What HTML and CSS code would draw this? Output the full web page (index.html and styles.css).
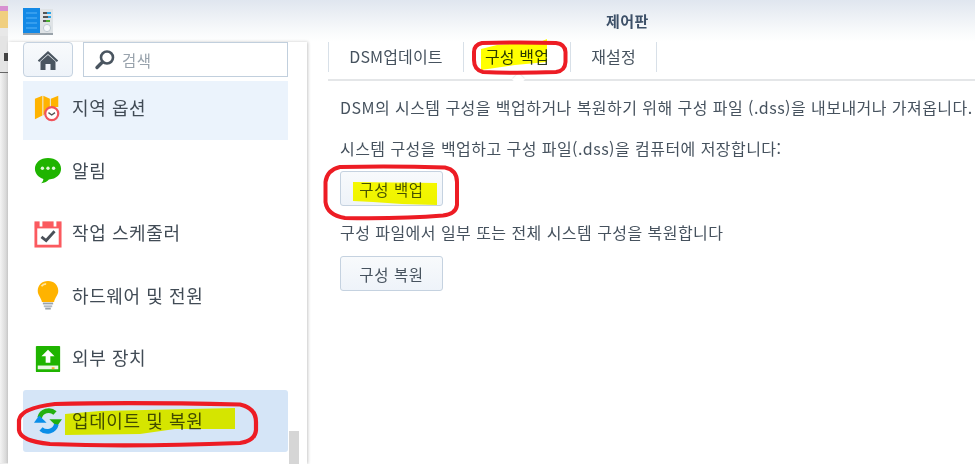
FILE: index.html
```html
<!DOCTYPE html>
<html lang="ko">
<head>
<meta charset="utf-8">
<title>제어판</title>
<link rel="stylesheet" href="styles.css">
</head>
<body>
<div class="page">
  <div class="desktop">
    <div class="desk-art"></div>
    <div class="desk-bar"><span class="desk-arrow"></span></div>
    <div class="desk-line"></div>
  </div>
  <div class="window">
    <header class="titlebar">
      <svg class="app-icon" width="30" height="27" viewBox="0 0 30 27">
        <rect x="17" y="1" width="13" height="25" fill="#dfe3e6"/>
        <rect x="0" y="0" width="17" height="26" fill="#1389e6"/>
        <rect x="0" y="25" width="30" height="2" fill="#9aa3aa"/>
        <path d="M3 5h11M3 10h11M3 15h11M3 20h11" stroke="#58b4f5" stroke-width="1.2"/>
        <rect x="20" y="4" width="4" height="2" fill="#555"/><rect x="24" y="4" width="4" height="2" fill="#2aa5e8"/>
        <rect x="20" y="8" width="5" height="2" fill="#555"/><rect x="25" y="8" width="3" height="2" fill="#2aa5e8"/>
        <rect x="20" y="12" width="3" height="2" fill="#555"/><rect x="23" y="12" width="4" height="2" fill="#4cb030"/>
        <circle cx="24" cy="20" r="3.6" fill="#f6f8fa" stroke="#c2ccd4"/>
      </svg>
      <h1 class="title">제어판</h1>
    </header>
    <div class="main">
      <aside class="sidebar">
        <div class="tools">
          <button class="home" aria-label="home">
            <svg width="22" height="20" viewBox="0 0 22 20"><path d="M11 1 0.8 10.5l1.4 1.5L11 4l8.800 8 1.400-1.500z" fill="#4a5560"/><path d="M3.500 11.500 11 5l7.500 6.500V20h-5v-6h-5v6h-5z" fill="#4a5560"/></svg>
          </button>
          <div class="search">
            <svg width="22" height="22" viewBox="0 0 22 22"><circle cx="13" cy="8.500" r="6" fill="none" stroke="#4a5560" stroke-width="2.600"/><path d="M8.500 13 3 18.500" stroke="#4a5560" stroke-width="3.400" stroke-linecap="round"/></svg>
            <span class="search-text">검색</span>
          </div>
        </div>
        <ul class="menu">
          <li class="item item-first">
            <svg class="ico" width="28" height="28" viewBox="0 0 30 30">
              <path d="M1 5l8-3v21l-8 4zM10 2l7 3v10l-7 8zM18 5l8-3v12h-8z" fill="#ffb300"/>
              <circle cx="19" cy="21" r="7" fill="#fff" stroke="#f0545c" stroke-width="2.400"/>
              <path d="M15.500 20l3.500 2.500 3.500-2.500" fill="none" stroke="#555" stroke-width="1.500"/>
            </svg>
            <span>지역 옵션</span>
          </li>
          <li class="item">
            <svg class="ico" width="28" height="28" viewBox="0 0 30 30">
              <path d="M15 1C6.800 1 1 6 1 12.500c0 5 3.500 9 9 11 0 2-1 3.500-2.500 4.500 4 0 7-2.500 8.500-4 8-.5 13-5.500 13-11.500C29 6 23.200 1 15 1z" fill="#1fb400"/>
              <circle cx="9" cy="12" r="1.800" fill="#dff5d8"/><circle cx="15" cy="12" r="1.800" fill="#dff5d8"/><circle cx="21" cy="12" r="1.800" fill="#dff5d8"/>
            </svg>
            <span>알림</span>
          </li>
          <li class="item">
            <svg class="ico" width="28" height="28" viewBox="0 0 30 30">
              <rect x="2" y="3" width="26" height="25" fill="#fff" stroke="#fb5a5f" stroke-width="3"/>
              <rect x="1" y="3" width="28" height="6" fill="#fb5a5f"/>
              <rect x="6" y="1" width="3" height="6" fill="#fff"/><rect x="21" y="1" width="3" height="6" fill="#fff"/>
              <path d="M8 18l5 4 9-10" fill="none" stroke="#4a5058" stroke-width="3"/>
            </svg>
            <span>작업 스케줄러</span>
          </li>
          <li class="item">
            <svg class="ico" width="28" height="30" viewBox="0 0 30 32">
              <path d="M15 0C8.500 0 4 4.500 4 10.500c0 5 3.500 7 4.500 12h13c1-5 4.500-7 4.500-12C26 4.500 21.500 0 15 0z" fill="#ffb300"/>
              <path d="M8 5.500C9.500 3.500 11.500 3 13 3" stroke="#ffe6a0" stroke-width="2" fill="none"/>
              <rect x="9.500" y="23" width="11" height="2" fill="#9aa3ab"/><rect x="10.500" y="26" width="9" height="2" fill="#b4bbc2"/><rect x="12" y="28.500" width="6" height="2" fill="#9aa3ab"/>
            </svg>
            <span>하드웨어 및 전원</span>
          </li>
          <li class="item">
            <svg class="ico" width="28" height="28" viewBox="0 0 30 30">
              <rect x="2" y="1" width="26" height="28" rx="1" fill="#1fb400"/>
              <path d="M15 5l-7 7h4.500v7h5v-7H22z" fill="#fff"/>
              <rect x="4" y="22" width="22" height="4" fill="#eaf7e4"/><rect x="19" y="24" width="3" height="1.500" fill="#ffa000"/>
            </svg>
            <span>외부 장치</span>
          </li>
          <li class="item item-active">
            <svg class="ico" width="28" height="28" viewBox="0 0 30 30">
              <path d="M6 11.500A10 10 0 0 1 22.500 6.500" fill="none" stroke="#22b010" stroke-width="5"/>
              <path d="M16.500 13H30L24.500 21z" fill="#22b010"/>
              <path d="M24 18.500A10 10 0 0 1 7.500 23.500" fill="none" stroke="#0a8ee8" stroke-width="5"/>
              <path d="M13.500 17H0L5.500 9z" fill="#0a8ee8"/>
            </svg>
            <span>업데이트 및 복원</span>
          </li>
        </ul>
        <div class="scroll-thumb"></div>
      </aside>
      <section class="content">
        <nav class="tabs">
          <div class="tab tab-dsm">DSM업데이트</div>
          <div class="tab tab-backup">구성 백업</div>
          <div class="tab tab-reset">재설정</div>
        </nav>
        <div class="tab-rule"><span class="notch"></span></div>
        <div class="panel">
          <p class="line-intro">DSM의 시스템 구성을 백업하거나 복원하기 위해 구성 파일 (.dss)을 내보내거나 가져옵니다.</p>
          <p class="line-save">시스템 구성을 백업하고 구성 파일(.dss)을 컴퓨터에 저장합니다:</p>
          <button class="btn btn-first">구성 백업</button>
          <p class="line-restore">구성 파일에서 일부 또는 전체 시스템 구성을 복원합니다</p>
          <button class="btn btn-second">구성 복원</button>
        </div>
      </section>
    </div>
  </div>
  <svg class="marks marks-yellow" width="975" height="464" viewBox="0 0 975 464" aria-hidden="true">
    <path d="M481 49 L497 45 L540 42 L547 39 L547 62 L515 65 L481 70z" fill="#ffff00"/>
    <path d="M353 182 L437 183 L437 205 L402 204 L373 202 L353 201z" fill="#ffff00"/>
    <path d="M65 414 L100 411 L235 408 L235 429 L175 429 L140 434 L65 435z" fill="#ffff00"/>
  </svg>
  <svg class="marks" width="975" height="464" viewBox="0 0 975 464" aria-hidden="true">
    <path d="M482 43 Q520 42 556 43 Q565 44 565.500 52 L565.500 62 Q565 71 556 72 Q515 73.500 483 72 Q474 70 474 60 L474 52 Q474 45 482 43z" fill="none" stroke="#ed1c24" stroke-width="4"/>
    <path d="M340 167 Q395 166 445 167.500 Q457 170 457 182 L457 205 Q456 214 443 215.500 Q400 219 345 218 Q327 215 325.500 202 L325.500 182 Q327 170 340 167z" fill="none" stroke="#ed1c24" stroke-width="4"/>
    <path d="M55 404 Q130 402 240 404.500 Q256 408 256 422 L256 430 Q255 441 240 443 Q130 447 50 444 Q20 441 19 430 L19 420 Q21 408 55 404z" fill="none" stroke="#ed1c24" stroke-width="4.200"/>
  </svg>
</div>
</body>
</html>
```
FILE: styles.css
```css
* { box-sizing: border-box; }
html, body { margin: 0; padding: 0; background: #fff; }
body { width: 975px; height: 464px; overflow: hidden; font-family: "Noto Sans CJK KR", "Noto Sans", sans-serif; color: #414b55; }
.page { position: relative; display: flex; width: 975px; height: 464px; overflow: hidden; }
.desktop { width: 8px; flex: none; display: flex; flex-direction: column; background: #ececec; }
.desk-art { height: 36px; background: linear-gradient(180deg, #e6e6e6 0 6px, #d890d0 6px 11px, #f0cf80 11px 28px, #e8e8e8 28px); }
.desk-bar { height: 36px; background: #e4e4e4; position: relative; }
.desk-arrow { display: block; width: 4px; height: 8px; margin-top: 17px; margin-left: 4px; background: #444; }
.desk-line { height: 392px; background: linear-gradient(90deg, #f4f4f4, #d0d0d0); border-top: 2px solid #666; margin-top: -1px; }
.window { flex: 1; min-width: 0; display: flex; flex-direction: column; }
.titlebar { position: relative; height: 42px; flex: none; display: flex; background: linear-gradient(180deg, #e0e6ef 0, #f6f8fa 28px, #fff 42px); padding: 8px 0 0 15px; }
.app-icon { flex: none; }
.title { margin: 2px 0 0 553px; font-size: 15px; line-height: 22px; height: 22px; font-weight: 700; color: #3d5068; white-space: nowrap; letter-spacing: .4px; }
.main { flex: 1; min-height: 0; display: flex; }
.sidebar { position: relative; width: 299px; flex: none; padding: 0 19px 0 15px; background: #fff; box-shadow: 1px 0 3px rgba(0,0,0,.22); }
.tools { display: flex; gap: 10px; height: 35px; }
.home { width: 50px; height: 35px; padding: 0; display: flex; align-items: center; justify-content: center; border: 1px solid #c5d2e0; border-radius: 4px; background: linear-gradient(180deg, #f8fafc, #eef3f9); }
.search { width: 205px; height: 35px; display: flex; align-items: center; gap: 6px; padding-left: 10px; border: 1px solid #c1cfdd; background: #fff; }
.search-text { color: #99a3ad; font-size: 15.500px; letter-spacing: .5px; line-height: 20px; }
.menu { list-style: none; margin: 4px 0 0; padding: 0; }
.item { display: flex; align-items: center; gap: 10px; height: 62.500px; padding-left: 11px; font-size: 18px; color: #414b55; white-space: nowrap; }
.item span { letter-spacing: .6px; margin-top: -3px; }
.ico { flex: none; }
.item-first { height: 59px; background: #ebf3fc; padding-bottom: 5px; }
.item-active { height: 62px; background: #d5e5f7; border-radius: 3px; }
.scroll-thumb { position: absolute; left: 281px; top: 389px; width: 10px; height: 40px; background: #d6d6d6; }
.content { flex: 1; min-width: 0; padding-left: 21px; }
.tabs { display: flex; height: 30px; }
.tab { height: 30px; line-height: 28px; font-size: 16px; text-align: center; border-left: 1px solid #d8e0e8; color: #46525e; white-space: nowrap; letter-spacing: .15px; }
.tab-dsm { width: 135px; }
.tab-backup { width: 107px; color: #2a3a28; }
.tab-reset { width: 87px; border-right: 1px solid #d8e0e8; }
.tab-rule { position: relative; height: 2px; margin-top: 7px; background: #e4e6e8; }
.notch { position: absolute; left: 186px; top: -4px; width: 9px; height: 9px; background: #fff; transform: rotate(45deg); box-shadow: -1px -1px 1px rgba(0,0,0,.08); }
.panel { padding: 0 0 0 12px; }
.panel p { margin: 0; font-size: 16px; line-height: 22px; white-space: nowrap; color: #46525e; letter-spacing: .45px; }
.line-intro { padding-top: 15px; }
.line-save { padding-top: 19px; }
.btn { display: block; width: 103px; height: 35px; padding: 0; font: inherit; font-size: 15.500px; color: #46525e; letter-spacing: .6px; border: 1px solid #c5d2e0; border-radius: 3px; background: linear-gradient(180deg, #f8fafc, #eef3f9); }
.btn-first { margin-top: 12px; }
.line-restore { padding-top: 15px; }
.btn-second { margin-top: 13px; }
.marks { position: absolute; left: 0; top: 0; pointer-events: none; }
.marks-yellow { mix-blend-mode: multiply; }
```
